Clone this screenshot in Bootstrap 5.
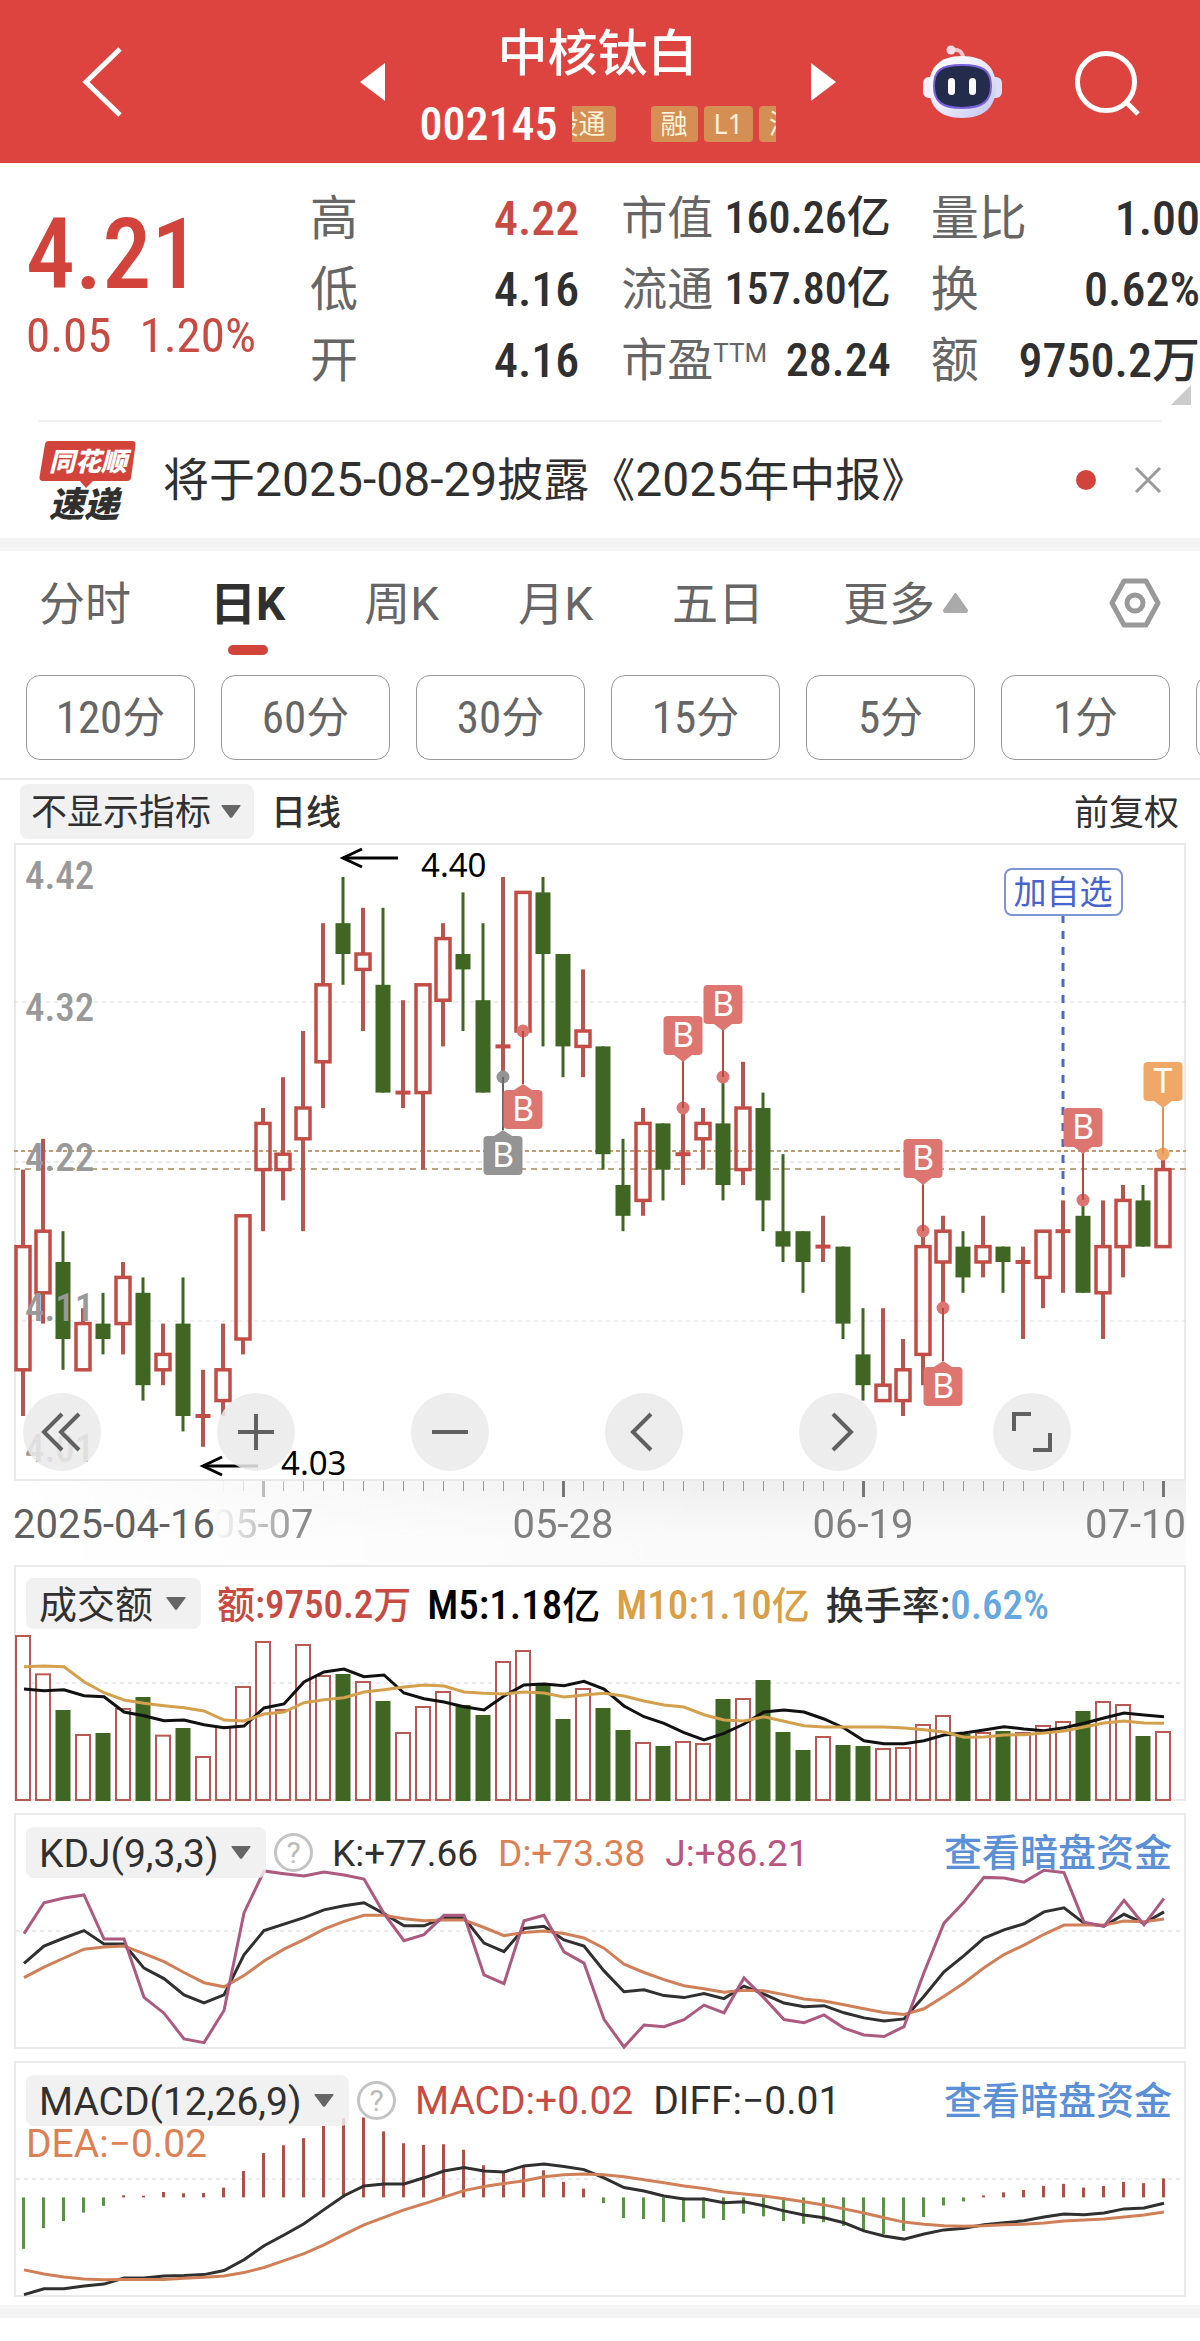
<!DOCTYPE html>
<html lang="zh-CN">
<head>
<meta charset="utf-8">
<meta name="viewport" content="width=device-width, initial-scale=1">
<title>中核钛白 002145</title>
<link rel="stylesheet" href="https://cdn.jsdelivr.net/npm/bootstrap@5.3.0/dist/css/bootstrap.min.css">
<script src="https://cdn.jsdelivr.net/npm/bootstrap@5.3.0/dist/js/bootstrap.bundle.min.js"></script>
<style>
:root{--up:#c84b43;--ink:#303030;--soft:#666;--rule:#eaeaea;--cjk:"Noto Sans CJK SC"}
body{font-family:Roboto,var(--cjk),sans-serif;color:var(--ink);background:#fff;overflow-x:hidden}
.num{font-family:"Roboto Condensed",Roboto,var(--cjk),sans-serif}
svg{display:block}
.plain{background:none;border:0;padding:0;color:inherit;line-height:1}
.up{color:var(--up)}
/* header */
.topbar{background:#dd443f;color:#fff;height:163px;padding:0 59px 0 82px}
.topbar h1{font-size:50px;font-weight:500;line-height:60px;margin:0}
.topgroup{gap:35px;margin-left:150px}
.topmid{padding-top:8px;width:356px}
.coderow{gap:14px;margin-top:16px}
.code{font-size:46px;font-weight:500;line-height:48px}
.pills{width:207px;overflow:hidden;gap:6px}
.pill{background:#d58f55;color:#fff3da;font:27px/36px "Noto Sans",var(--cjk),sans-serif;padding:0 10px;border-radius:4px;flex:none}
.pill.first{margin-left:-57px;margin-right:29px}
/* quote */
.quote{padding:20px 0 24px 26px}
.price{width:284px;padding-top:22px;color:#d2433c}
.price .big{font-size:98px;font-weight:500;line-height:100px}
.price .chg{font-size:49px;line-height:62px;gap:28px;color:var(--up)}
.stat{line-height:71px;font-size:48px}
.stat dt{font-weight:400;color:var(--soft)}
.stat dd{font-weight:500;margin:0}
.stat.mid{font-size:46px}
.stat.mid dd{font-size:44px}
.stat sup{font-size:26px;top:-14px;vertical-align:baseline}
.corner{right:9px;bottom:15px}
.hair{height:2px;background:#eee;margin:0 39px}
.notice{height:116px;padding:0 39px;font-size:46px}
.notice .d{font-size:48px}
.band{height:13px;background:#f4f4f4}
/* tabs */
.tabs{padding:19px 39px 0 39px;gap:79px}
.tabs a{font-size:46px;line-height:68px;color:var(--soft);text-decoration:none}
.tabs a::after{content:"";display:block;width:40px;height:10px;border-radius:5px;margin:7px auto 0}
.tabs a.active{color:var(--ink);font-weight:700}
.tabs a.active::after{background:#d2433c}
.mins{padding:20px 0 18px 26px;gap:26px;overflow:hidden;border-bottom:2px solid var(--rule)}
.mins .btn{flex:0 0 169px;height:85px;border:1px solid #999;border-radius:14px;color:var(--soft);font-size:43px;padding:0}
.mins .num{font-size:45px}
.tools{padding:4px 21px 3px 20px;font-size:35px;line-height:56px;gap:17px}
.tools span{padding-top:2px;margin-bottom:-2px}
.form-select.chip{--bs-form-select-bg-img:url("data:image/svg+xml,%3csvg xmlns='http://www.w3.org/2000/svg' viewBox='0 0 20 13'%3e%3cpath fill='%23666' d='M1 0h18q1 0 .5 1L11 12.400q-1 .8-2 0L.5 1Q0 0 1 0z'/%3e%3c/svg%3e");
 width:auto;border:0;background-color:rgba(238,238,238,.85);background-size:20px 13px;background-position:right 15px center;border-radius:8px;
 color:var(--ink);font-size:39px;line-height:51px;height:51px;padding:2px 47px 0 13px}
.form-select.chip.cn{font-size:38px}
.tools .form-select.chip{font-size:36px;height:55px;line-height:55px;padding:2px 42px 0 11px;background-position:right 13px center}
/* panels */
.panel{margin:0 14px;border:2px solid var(--rule);display:grid}
.panel>*{grid-area:1/1;min-width:0}
.panel svg.plot,.axis svg{width:100%;height:auto;overflow:visible}
.pads{align-self:end;padding:0 0 8px 7px;gap:116px;z-index:1}
.pad{width:78px;height:78px;border-radius:50%;border:0;padding:0;background:rgba(234,234,234,.86);flex:none}
.pad svg{margin:auto}
.axis{margin:0 14px;background:linear-gradient(90deg,#fff,rgba(255,255,255,0) 60%),linear-gradient(#efefef,#fafafa 70%)}
.legend{padding:11px 12px 0 10px;font-size:38px;line-height:51px;z-index:1;white-space:nowrap;align-self:start}
.legend span,.legend a{padding-top:2px}
.legend .num{font-size:41px;padding:0}
.legend a{color:#5b8fd6;text-decoration:none}
.kvals{font-size:37px}
.mvals{font-size:39px}
.help{width:39px;height:39px;border:3px solid #c4c4c4;border-radius:50%;color:#bbb;font-size:30px;line-height:33px;text-align:center;margin:0 19px 0 8px}
.w5{font-weight:500}
</style>
</head>
<body>
<header class="topbar d-flex align-items-center justify-content-between">
  <button class="plain" aria-label="返回"><svg width="40" height="72" viewBox="0 0 40 72" fill="none" stroke="#fff" stroke-width="5"><path d="M38 3 4 36l34 33"/></svg></button>
  <div class="topgroup d-flex align-items-center">
    <button class="plain" aria-label="上一只"><svg width="25" height="38" viewBox="0 0 25 38"><path fill="#fff" d="M25 0v38L0 19z"/></svg></button>
    <div class="topmid text-center">
      <h1>中核钛白</h1>
      <div class="coderow d-flex align-items-center justify-content-center">
        <span class="num code">002145</span>
        <div class="pills d-flex"><span class="pill first">深股通</span><span class="pill">融</span><span class="pill">L1</span><span class="pill">深股通</span></div>
      </div>
    </div>
    <button class="plain" aria-label="下一只"><svg width="25" height="38" viewBox="0 0 25 38"><path fill="#fff" d="M0 0v38l25-19z"/></svg></button>
  </div>
  <div class="d-flex align-items-center" style="gap:73px">
    <button class="plain" aria-label="智能助手"><svg width="79" height="74" viewBox="0 0 79 74">
      <defs><linearGradient id="shell" x1="0" y1="0" x2="1" y2="1"><stop offset="0" stop-color="#fff"/><stop offset=".5" stop-color="#ecebfb"/><stop offset="1" stop-color="#c0c3ee"/></linearGradient></defs>
      <path d="M28 5q12-2 12 9" fill="none" stroke="#f6c6cf" stroke-width="4"/><circle cx="28" cy="5" r="4.500" fill="#fbdde2"/>
      <rect x="0" y="32" width="14" height="21" rx="6" fill="#f1effb"/><rect x="65" y="32" width="14" height="21" rx="6" fill="#dfdcf7"/>
      <path d="M39 11c23 0 34 12 34 31S62 73 39 73 6 61 6 42s10-31 33-31z" fill="url(#shell)"/>
      <path d="M39 20c22 0 29 6 29 21s-8 22-29 22-28-7-28-22 6-21 28-21z" fill="#242c4c" stroke="#7a62dc" stroke-width="2"/>
      <rect x="25" y="33" width="7" height="17" rx="3.500" fill="#fff"/><rect x="46" y="33" width="7" height="17" rx="3.500" fill="#fff"/></svg></button>
    <button class="plain pt-1" aria-label="搜索"><svg width="66" height="66" viewBox="0 0 66 66" fill="none" stroke="#fff" stroke-width="5"><circle cx="31" cy="31" r="28.500"/><path d="m51 51 12 12"/></svg></button>
  </div>
</header>

<section class="quote d-flex position-relative">
  <div class="price num flex-shrink-0">
    <div class="big">4.21</div>
    <div class="chg d-flex"><span>0.05</span><span>1.20%</span></div>
  </div>
  <div class="row g-0 flex-grow-1">
    <dl class="col stat mb-0" style="margin-right:42px">
      <div class="d-flex justify-content-between"><dt>高</dt><dd class="num up">4.22</dd></div>
      <div class="d-flex justify-content-between"><dt>低</dt><dd class="num">4.16</dd></div>
      <div class="d-flex justify-content-between"><dt>开</dt><dd class="num">4.16</dd></div>
    </dl>
    <dl class="col stat mid mb-0" style="margin-right:40px">
      <div class="d-flex justify-content-between"><dt>市值</dt><dd class="num">160.26亿</dd></div>
      <div class="d-flex justify-content-between"><dt>流通</dt><dd class="num">157.80亿</dd></div>
      <div class="d-flex justify-content-between"><dt>市盈<sup>TTM</sup></dt><dd class="num" style="font-size:46px">28.24</dd></div>
    </dl>
    <dl class="col stat mb-0">
      <div class="d-flex justify-content-between"><dt>量比</dt><dd class="num">1.00</dd></div>
      <div class="d-flex justify-content-between"><dt>换</dt><dd class="num">0.62%</dd></div>
      <div class="d-flex justify-content-between"><dt>额</dt><dd class="num">9750.2万</dd></div>
    </dl>
  </div>
  <svg class="corner position-absolute" width="20" height="20"><path fill="#ccc" d="M20 0v20H0z"/></svg>
</section>
<div class="hair"></div>

<section class="notice d-flex align-items-center">
  <svg width="98" height="80" viewBox="0 0 98 80" class="flex-shrink-0">
    <path fill="#d2433c" d="M10 1h83q4 0 3.500 4L92 38q-.5 3-4 3H54l-7 7-6-7H4q-4 0-3.500-4L6 4q.5-3 4-3z"/>
    <text x="10" y="31" font-family="Noto Sans CJK SC" font-size="26" font-weight="900" font-style="italic" fill="#fff">同花顺</text>
    <text x="10" y="77" font-family="Noto Sans CJK SC" font-size="35" font-weight="900" font-style="italic" fill="#303030">速递</text>
  </svg>
  <span class="text-nowrap" style="margin-left:26px">将于<span class="d">2025-08-29</span>披露《<span class="d">2025</span>年中报》</span>
  <svg class="ms-auto" width="20" height="20"><circle cx="10" cy="10" r="10" fill="#d2433c"/></svg>
  <button class="plain" aria-label="关闭" style="margin-left:39px"><svg width="26" height="26" viewBox="0 0 26 26" stroke="#999" stroke-width="3"><path d="m1 1 24 24M25 1 1 25"/></svg></button>
</section>
<div class="band"></div>

<nav class="tabs d-flex">
  <a href="#">分时</a><a href="#" class="active" aria-current="page">日K</a><a href="#">周K</a><a href="#">月K</a><a href="#">五日</a>
  <div class="d-flex"><a href="#">更多</a><svg style="margin:23px 0 0 8px" width="25" height="20"><path fill="#aaa" d="M12.500 0q1 0 2 2L25 17q0 3-2 3H2q-2 0-2-3L10.500 2q1-2 2-2z"/></svg></div>
  <button class="plain ms-auto align-self-start" aria-label="设置" style="margin-top:8px"><svg width="52" height="50" viewBox="0 0 52 50" fill="none" stroke="#999" stroke-width="5" stroke-linejoin="round"><path d="M15 3h22l12 22-12 22H15L3 25z"/><circle cx="26" cy="25" r="8"/></svg></button>
</nav>
<div class="mins d-flex">
  <button class="btn"><span class="num">120</span>分</button><button class="btn"><span class="num">60</span>分</button><button class="btn"><span class="num">30</span>分</button><button class="btn"><span class="num">15</span>分</button><button class="btn"><span class="num">5</span>分</button><button class="btn"><span class="num">1</span>分</button><button class="btn" aria-label="更多周期"></button>
</div>
<div class="tools d-flex">
  <select class="form-select chip" aria-label="主图指标"><option>不显示指标</option></select>
  <span class="w5">日线</span><span class="ms-auto">前复权</span>
</div>

<section class="panel">
  <svg class="plot" id="kline" viewBox="16 845 1168 634"></svg>
  <div class="pads d-flex">
    <button class="pad" aria-label="最早"><svg width="42" height="42" fill="none" stroke="#606060" stroke-width="4"><path d="M21 3 3 21l18 18M38 3 20 21l18 18"/></svg></button>
    <button class="pad" aria-label="放大"><svg width="42" height="42" stroke="#606060" stroke-width="4"><path d="M3 21h36M21 3v36"/></svg></button>
    <button class="pad" aria-label="缩小"><svg width="42" height="42" stroke="#606060" stroke-width="4"><path d="M3 21h36"/></svg></button>
    <button class="pad" aria-label="左移"><svg width="42" height="42" fill="none" stroke="#606060" stroke-width="4"><path d="M28 3 10 21l18 18"/></svg></button>
    <button class="pad" aria-label="右移"><svg width="42" height="42" fill="none" stroke="#606060" stroke-width="4"><path d="m16 3 18 18-18 18"/></svg></button>
    <button class="pad" aria-label="全屏"><svg width="42" height="42" fill="none" stroke="#606060" stroke-width="4"><path d="M20 3H3v17M22 39h17V22"/></svg></button>
  </div>
</section>
<div class="axis"><svg id="dates" viewBox="14 1481 1172 84"></svg></div>

<section class="panel">
  <svg class="plot" id="vol" viewBox="16 1567 1168 232"></svg>
  <div class="legend d-flex" style="gap:16px">
    <select class="form-select chip cn" aria-label="副图一"><option>成交额</option></select>
    <span class="up w5">额<span class="num" style="font-size:39px">:9750.2</span>万</span><span class="text-black w5"><span class="num">M5:1.18</span>亿</span><span class="w5" style="color:#d9a047"><span class="num">M10:1.10</span>亿</span><span class="w5">换手率<span class="num">:<span style="color:#66a8e0">0.62%</span></span></span>
  </div>
</section>
<section class="panel" style="margin-top:12px">
  <svg class="plot" id="kdj" viewBox="16 1815 1168 232"></svg>
  <div class="legend d-flex align-items-center">
    <select class="form-select chip" aria-label="副图二"><option>KDJ(9,3,3)</option></select><button class="plain help" aria-label="指标说明">?</button>
    <div class="kvals d-flex" style="gap:20px"><span>K:+77.66</span><span style="color:#dd8054">D:+73.38</span><span style="color:#b9557f">J:+86.21</span></div><a href="#" class="ms-auto w5">查看暗盘资金</a>
  </div>
</section>
<section class="panel" style="margin-top:12px">
  <svg class="plot" id="macd" viewBox="16 2063 1168 232"></svg>
  <div class="legend">
    <div class="d-flex align-items-center">
      <select class="form-select chip" aria-label="副图三"><option>MACD(12,26,9)</option></select><button class="plain help" aria-label="指标说明">?</button>
      <div class="mvals d-flex" style="gap:20px"><span class="up">MACD:+0.02</span><span>DIFF:−0.01</span></div><a href="#" class="ms-auto w5">查看暗盘资金</a>
    </div>
    <div class="mvals" style="color:#dd8054;line-height:34px">DEA:−0.02</div>
  </div>
</section>
<div class="band mt-2"></div>

<script>
const RED='#c24d46', GREEN='#3f6622', X=i=>23+20*i;
const line=(x1,y1,x2,y2,c,w,d)=>`<path d="M${x1} ${y1}L${x2} ${y2}" fill="none" stroke="${c}" stroke-width="${w}"${d?` stroke-dasharray="${d}"`:''}/>`;
const poly=(a,base,c,k=3)=>`<polyline points="${a.map((v,i)=>(X(i)+1)+','+(base+v/k).toFixed(1)).join(' ')}" fill="none" stroke="${c}" stroke-width="3"/>`;
const nums=s=>s.split(' ').map(Number);

/* candles: direction, high, body top, body bottom, low, in cents below 4.40 */
const K=`r19,24,32,35 r17,23,27,29 g23,25,30,32 r28,29,32,32 g27,29,30,31 r25,26,29,31 g26,27,33,34 r29,31,32,33 g26,29,35,36 r32,35,35,37
r29,32,34,35 r22,22,30,31 r15,16,19,23 r13,18,19,21 r10,15,17,23 r3,7,12,15 g0,3,5,7 r2,5,6,10 g2,7,14,14 r8,14,14,15
r7,7,14,19 r3,4,8,11 g1,5,6,10 g3,8,14,14 r0,11,11,13 r1,1,10,10 g0,1,5,11 g5,5,11,13 r6,10,11,13 g11,11,18,19
g17,20,22,23 r15,16,21,22 g16,16,19,21 r15,18,18,20 r15,16,17,19 g13,16,20,21 r12,15,19,20 g14,15,21,23 g18,23,24,25 g23,23,25,27
r22,24,24,25 g24,24,29,30 g28,31,33,34 r28,33,34,34 r30,32,34,35 r23,24,31,33 r22,23,25,28 g23,24,26,27 r22,24,25,26 g24,24,25,27
r24,25,25,30 r23,23,26,28 r21,23,23,27 g21,22,27,27 r21,24,27,30 r20,21,24,26 g20,21,24,24 r18,19,24,24`.split(/\s+/).map(s=>[s[0],...s.slice(1).split(',').map(Number)]);
const Y=n=>877+15.4*n;
let s=[1002,1321].map(y=>line(14,y,1186,y,'#dcdcdc',1,'4 4')).join('')+line(14,1162,1186,1162,'#ebebeb',2,'4 4')+line(14,1151,1186,1151,'#c09a70',2,'4 3')+line(14,1169,1186,1169,'#bca582',2,'6 5');
K.forEach(([d,h,t,b,l],i)=>{const x=X(i);
 if(d=='g'){s+=line(x,Y(h),x,Y(l),GREEN,3)+`<rect x="${x-7.5}" y="${Y(t)}" width="15" height="${Y(b)-Y(t)}" fill="${GREEN}"/>`}
 else{s+=line(x,Y(h),x,Y(t),'#b4584f',4)+line(x,Y(b),x,Y(l),'#b4584f',4);
  s+=t==b?line(x-7.5,Y(t),x+7.5,Y(t),RED,4):`<rect x="${x-7}" y="${Y(t)}" width="14" height="${Y(b)-Y(t)}" fill="none" stroke="${RED}" stroke-width="3.500"/>`}});
s+=[['4.42',889],['4.32',1021],['4.22',1171],['4.11',1321],['4.01',1462]].map(([t,y])=>`<text x="25" y="${y}" font-family="Roboto Condensed" font-size="39" font-weight="500" fill="#999">${t}</text>`).join('');
const arrow=(x,y,t,ty)=>line(x,y,x+55,y,'#000',3)+`<path d="M${x+19} ${y-9}L${x} ${y}L${x+19} ${y+9}" fill="none" stroke="#000" stroke-width="3"/><text x="${x+78}" y="${ty}" font-family="Noto Sans" font-size="33" fill="#000">${t}</text>`;
s+=arrow(343,858,'4.40',877)+arrow(203,1466,'4.03',1475);
s+=line(1063,915,1063,1195,'#4f68c0',3,'8 8')+`<rect x="1005" y="869" width="117" height="46" rx="7" fill="#fff" stroke="#7f95d8" stroke-width="2"/><text x="1063" y="904" text-anchor="middle" font-family="Noto Sans CJK SC" font-size="33" fill="#4764cc">加自选</text>`;
/* trade flags: candle, anchor y, letter, colour, stem colour, direction (-1 above, 1 below) */
[[24,1077,'B','#949494','#666',1],[25,1031,'B','#dd7571','#b8483f',1],[33,1108,'B','#dd7571','#b8483f',-1],[35,1077,'B','#dd7571','#b8483f',-1],[45,1231,'B','#dd7571','#b8483f',-1],[46,1308,'B','#dd7571','#b8483f',1],[53,1200,'B','#dd7571','#b8483f',-1],[57,1154,'T','#f0a868','#dd9450',-1]].forEach(([i,y,t,c,k,d])=>{
 const x=X(i),top=d<0?y-92:y+59,e=y+59,p=y+d*53;
 s+=`<circle cx="${x}" cy="${y}" r="6.500" fill="${c}"/>`+line(x,y,x,p,k,2)+`<rect x="${x-19.5}" y="${top}" width="39" height="39" rx="4" fill="${c}"/><path d="M${x-9} ${d<0?y-53:e}L${x} ${d<0?y-46:p}L${x+9} ${d<0?y-53:e}z" fill="${c}"/><text x="${x}" y="${top+31}" text-anchor="middle" font-family="Noto Sans" font-size="34" fill="#fff">${t}</text>`});
kline.innerHTML=s;

/* date axis, faded out behind the first date */
s='<defs><linearGradient id="fade" gradientUnits="userSpaceOnUse" x1="215" x2="320" y1="0" y2="0"><stop offset="0" stop-color="#fff" stop-opacity="0"/><stop offset="1" stop-color="#fff"/></linearGradient><mask id="m" maskUnits="userSpaceOnUse" x="14" y="1481" width="1180" height="90"><rect x="14" y="1481" width="1180" height="90" fill="url(#fade)"/></mask></defs><g mask="url(#m)">';
for(let i=10;i<58;i++){const big=(i-12)%15==0;s+=line(X(i)+.5,1481,X(i)+.5,big?1497:1491,big?'#777':'#999',big?3:1)}
const dt=(x,t,a,c)=>`<text x="${x}" y="1538" text-anchor="${a}" font-family="Roboto" font-size="40" fill="${c}">${t}</text>`;
s+=dt(263,'05-07','middle','#777')+dt(563,'05-28','middle','#808080')+dt(863,'06-19','middle','#808080')+dt(1186,'07-10','end','#808080')+'</g>'+dt(13,'2025-04-16','start','#606060');
dates.innerHTML=s;

/* turnover */
const V=nums('225 340 450 522 519 444 411 524 504 588 498 378 243 447 252 345 342 363 423 516 438 393 435 465 303 270 375 477 384 444 510 546 558 543 549 417 414 360 516 570 528 555 558 564 561 492 465 522 516 513 516 495 483 453 423 432 528 513');
s=line(16,1683,1184,1683,'#ebebeb',2,'4 4');
V.forEach((v,i)=>{const x=X(i),y=1560+v/3;s+=K[i][0]=='g'?`<rect x="${x-7.5}" y="${y}" width="15" height="${1801-y}" fill="${GREEN}"/>`:`<rect x="${x-7}" y="${y+1}" width="14" height="${1799-y}" fill="#fff" stroke="#b85a53" stroke-width="2"/>`});
s+=poly(nums('387 392 389 407 410 456 467 482 480 494 503 498 444 432 366 336 327 350 345 399 416 426 440 450 408 375 372 377 364 387 438 470 490 518 540 520 492 456 450 456 477 504 542 551 551 542 525 519 510 500 507 512 503 490 474 459 465 470'),1560,'#111');
s+=poly(nums('320 318 320 365 398 420 430 437 443 453 480 483 462 456 428 419 413 396 389 381 375 378 396 400 402 396 399 411 405 400 408 423 435 441 464 480 483 470 484 497 501 501 501 501 504 509 516 532 531 525 524 519 513 501 489 483 489 490'),1560,'#d3a04e');
vol.innerHTML=s;

/* KDJ */
const Q=2.953;
s=line(16,1931,1184,1931,'#ebebeb',2,'4 4');
s+=poly(nums('453 402 378 356 396 396 467 498 546 570 546 428 356 337 318 295 283 274 306 342 342 318 318 393 418 350 343 384 402 475 537 531 548 554 542 557 520 544 570 581 578 599 614 623 617 550 478 430 378 354 336 301 289 334 343 308 335 301'),1810,'#303030',Q);
s+=poly(nums('495 464 437 411 405 402 424 448 480 510 522 489 446 411 383 352 329 311 311 321 327 325 325 347 371 362 357 365 378 408 455 480 501 519 528 538 532 534 545 558 564 575 587 598 604 587 550 511 466 427 399 367 340 340 340 328 330 322'),1810,'#d08058',Q);
s+=poly(nums('365 274 260 251 381 381 553 600 676 687 592 304 180 188 195 183 192 204 306 386 368 311 311 487 513 327 311 419 452 618 700 635 640 619 576 599 496 555 619 628 605 644 664 669 640 480 334 272 199 201 213 178 185 331 343 267 339 261'),1810,'#ad5a80',Q);
kdj.innerHTML=s;

/* MACD */
s=line(16,2179,1184,2179,'#ebebeb',2,'4 4');
nums('1296 1235 1214 1189 1169 1138 1139 1128 1132 1131 1115 1066 1013 990 969 933 910 908 949 984 989 987 1003 1049 1068 1053 1064 1098 1118 1161 1205 1208 1217 1217 1206 1211 1192 1200 1214 1222 1217 1228 1244 1252 1243 1202 1168 1156 1138 1129 1122 1110 1104 1115 1110 1098 1102 1088').forEach((v,i)=>{s+=line(X(i)+.5,1810+1144/Q,X(i)+.5,1810+v/Q,v>1144?'#5b9148':'#ad5048',3)});
s+=poly(nums('1431 1414 1414 1406 1400 1382 1382 1376 1375 1372 1360 1328 1287 1255 1222 1180 1139 1110 1104 1104 1086 1066 1056 1066 1069 1051 1045 1053 1062 1086 1115 1125 1140 1149 1149 1160 1157 1169 1184 1196 1204 1219 1243 1258 1267 1252 1240 1235 1225 1219 1213 1202 1193 1195 1190 1178 1175 1161'),1810,'#303030',Q);
s+=poly(nums('1358 1370 1379 1385 1387 1386 1386 1386 1383 1380 1376 1366 1351 1331 1310 1284 1254 1225 1203 1181 1163 1143 1124 1112 1103 1095 1083 1077 1075 1077 1083 1092 1101 1110 1118 1128 1134 1140 1148 1157 1166 1178 1190 1204 1217 1223 1228 1229 1228 1225 1223 1220 1214 1211 1208 1202 1196 1187'),1810,'#d08058',Q);
macd.innerHTML=s;
</script>
</body>
</html>
